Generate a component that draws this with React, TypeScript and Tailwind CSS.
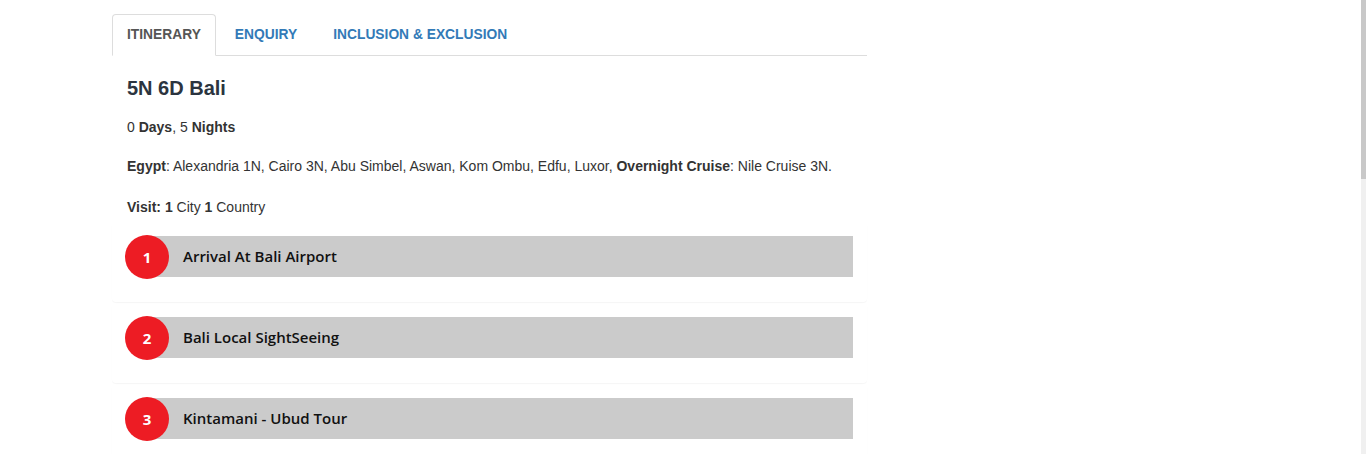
const TABS = ["ITINERARY", "ENQUIRY", "INCLUSION & EXCLUSION"];

const DAYS = [
  { no: 1, title: "Arrival At Bali Airport" },
  { no: 2, title: "Bali Local SightSeeing" },
  { no: 3, title: "Kintamani - Ubud Tour" },
];

export default function App() {
  return (
    <div className="relative h-[454px] overflow-hidden bg-white font-['Liberation_Sans',Arial,sans-serif] text-[14px] text-[#333]">
      <div className="ml-[112px] w-[755px] pt-[14px]">
        {/* tabs */}
        <ul className="flex border-b border-[#ddd]">
          {TABS.map((t, i) => (
            <li
              key={t}
              className={
                i === 0
                  ? "-mb-px mr-[2px] rounded-t-[4px] border border-[#ddd] border-b-white bg-white px-[14px] text-[13.8px] leading-[40px] font-bold text-[#555]"
                  : "-mb-px mr-[2px] border border-transparent px-[16px] text-[13.8px] leading-[40px] font-bold text-[#337ab7]"
              }
            >
              {t}
            </li>
          ))}
        </ul>

        {/* overview */}
        <div className="px-[15px]">
          <h3 className="mt-[21px] text-[20px] leading-[22px] font-bold text-[#2b3440]">5N 6D Bali</h3>
          <p className="mt-[18px] leading-[20px]">
            0 <b>Days</b>, 5 <b>Nights</b>
          </p>
          <p className="mt-[19px] leading-[20px]">
            <b>Egypt</b>: Alexandria 1N, Cairo 3N, Abu Simbel, Aswan, Kom Ombu, Edfu, Luxor,{" "}
            <b>Overnight Cruise</b>: Nile Cruise 3N.
          </p>
          <p className="mt-[21px] leading-[20px]">
            <b>Visit:</b> <b>1</b> City <b>1</b> Country
          </p>
        </div>

        {/* day list */}
        <div className="mt-[4px]">
          {DAYS.map((d) => (
            <div
              key={d.no}
              className="rounded-[4px] pt-[14px] pb-[23px] pl-[13px] pr-[14px] shadow-[0_1px_1px_rgba(0,0,0,0.04)]"
            >
              <div className="flex items-start">
                <div className="relative z-10 flex h-[44px] w-[44px] shrink-0 items-center justify-center rounded-full bg-[#ed1c24] font-['Open_Sans',sans-serif] text-[15px] font-bold text-white">
                  {d.no}
                </div>
                <div className="-ml-[22px] mt-[1px] flex h-[41px] flex-1 items-center bg-[#cbcbcb] pl-[36px] font-['Open_Sans',sans-serif] text-[15px] font-semibold text-[#111]">
                  {d.title}
                </div>
              </div>
            </div>
          ))}
        </div>
      </div>

      {/* page scrollbar */}
      <div className="absolute top-0 right-0 h-full w-[5px] bg-[#f0f0f0]">
        <div className="h-[179px] w-full bg-[#c8c8c8]" />
      </div>
    </div>
  );
}
